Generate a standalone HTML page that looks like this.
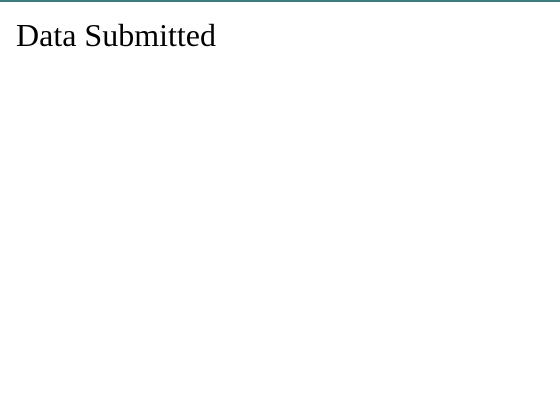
<!DOCTYPE html>
<html><head><style>
body{margin:0;background:#fff;border-top:2px solid #3d7b7d;width:560px;height:418px;overflow:hidden}
h1{margin:0;position:absolute;left:16px;top:17px;font:normal 32px/37px "Liberation Serif",serif;color:#000}
</style></head><body><h1>Data Submitted</h1></body></html>
